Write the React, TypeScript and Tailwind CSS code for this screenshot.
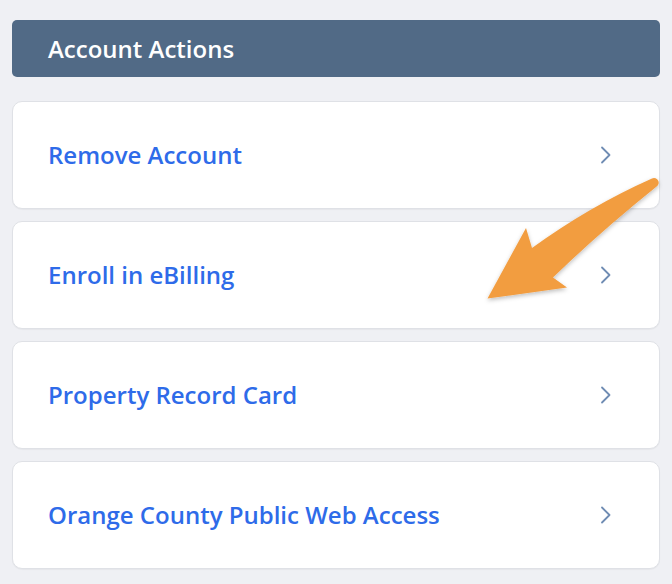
import React from "react";

const items = [
  "Remove Account",
  "Enroll in eBilling",
  "Property Record Card",
  "Orange County Public Web Access",
];

function Chevron() {
  return (
    <svg width="12" height="18" viewBox="0 0 12 18" fill="none">
      <path d="M2 1.5 L9.5 9 L2 16.5" stroke="#6f8cb3" strokeWidth="1.8" strokeLinecap="round" strokeLinejoin="round" />
    </svg>
  );
}

export default function App() {
  return (
    <div
      className="relative w-[672px] h-[584px] bg-[#eff0f4] px-[12px] pt-[20px] overflow-hidden"
      style={{ fontFamily: '"Open Sans", "Noto Sans", sans-serif' }}
    >
      <div className="h-[57px] rounded-[5px] bg-[#516a86] flex items-center pl-[36px]">
        <span className="text-white text-[24px] font-semibold leading-none pt-[1px]">Account Actions</span>
      </div>
      <div className="mt-[24px] flex flex-col gap-[12px]">
        {items.map((t) => (
          <div
            key={t}
            className="h-[108px] rounded-[10px] bg-white border border-[#dfe1e6] shadow-[0_1px_1px_rgba(0,0,0,0.04)] flex items-center justify-between pl-[35px] pr-[47px]"
          >
            <span className="text-[#2e6be9] text-[24px] font-semibold leading-none">{t}</span>
            <Chevron />
          </div>
        ))}
      </div>
      <svg
        className="absolute left-0 top-0 pointer-events-none"
        width="672"
        height="584"
        viewBox="0 0 672 584"
      >
        <defs>
          <filter id="sh" x="-20%" y="-20%" width="140%" height="140%">
            <feDropShadow dx="0" dy="2" stdDeviation="2" floodColor="#000" floodOpacity="0.25" />
          </filter>
        </defs>
        <path
          d="M652 178.5 Q590 206 532 248 L526 228 L487.5 298.5 L567 287.5 L553 277.5 Q600 232 656 187 A4.6 4.6 0 0 0 652 178.5 Z"
          fill="#f29d40"
          filter="url(#sh)"
        />
      </svg>
    </div>
  );
}
